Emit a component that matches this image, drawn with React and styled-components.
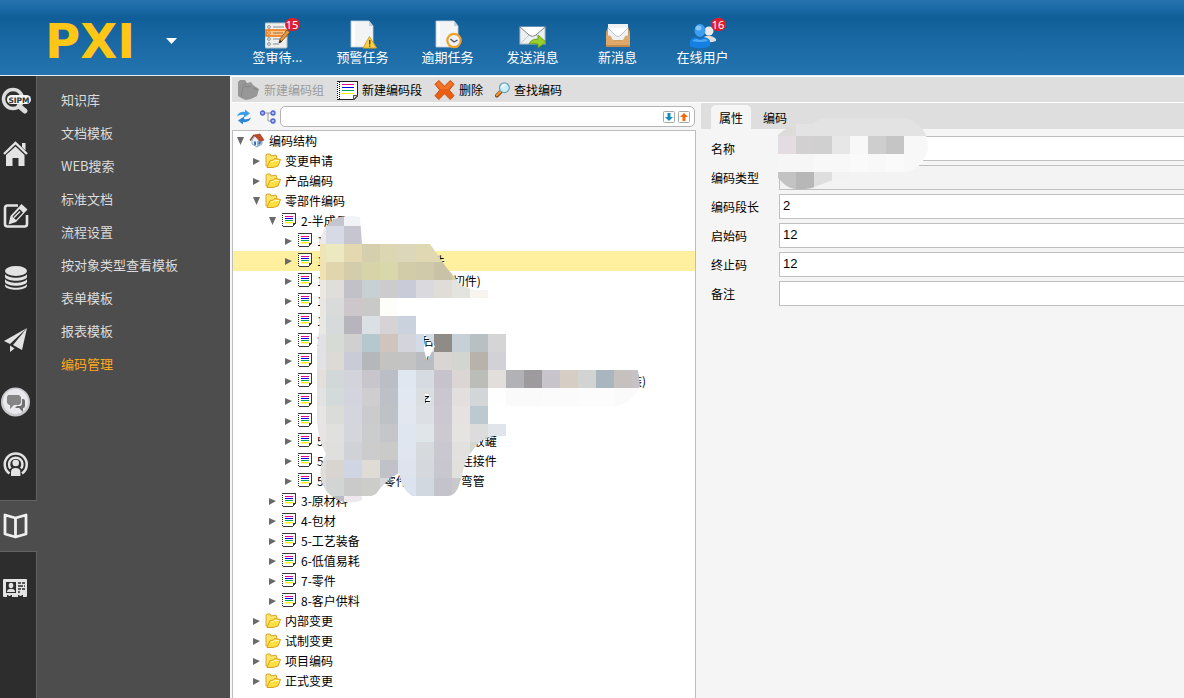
import React, { useState } from 'react';
import styled, { createGlobalStyle, css } from 'styled-components';

const GlobalStyle = createGlobalStyle`
  * {
    box-sizing: border-box;
  }

  body {
    margin: 0;
    background: #f5f5f5;
    color: #000;
    font-family: 'Noto Sans CJK SC', sans-serif;
    font-size: 12px;
  }

  button,
  input {
    font: inherit;
    color: inherit;
  }

  button {
    padding: 0;
    border: 0;
    background: none;
    cursor: pointer;
  }

  ul {
    margin: 0;
    padding: 0;
    list-style: none;
  }

  svg {
    display: block;
    flex: none;
  }
`;

const StyledPage = styled.div`
  display: flex;
  flex-direction: column;
  min-height: 100vh;
`;

const StyledHeader = styled.header`
  display: flex;
  align-items: stretch;
  height: 76px;
  border-bottom: 1px solid #e4eef6;
  background: linear-gradient(#2673af 0, #1d6ba6 8px, #0f5e97 18px, #13629c 24px, #2474b0 75px);
`;

const StyledBrand = styled.div`
  display: flex;
  align-items: center;
  flex: none;
  width: 235px;
  padding: 6px 0 0 45px;

  .name {
    width: 121px;
    color: #ffc715;
    font-family: 'DejaVu Sans', sans-serif;
    font-size: 48px;
    font-weight: 700;
    line-height: 48px;
  }
`;

const StyledShortcuts = styled.nav`
  display: flex;
`;

const StyledShortcut = styled.button`
  display: flex;
  flex-direction: column;
  align-items: center;
  width: 85px;
  padding-top: 20px;
  color: #fff;
  font-size: 13px;
  line-height: 16px;

  .picture {
    position: relative;
    height: 29px;
  }
`;

const StyledBadge = styled.span`
  position: absolute;
  top: -2px;
  right: -9px;
  width: 15px;
  height: 13px;
  border-radius: 7px;
  background: #dc1f2e;
  font-family: 'Noto Sans', sans-serif;
  font-size: 11px;
  line-height: 13px;
  text-align: center;
`;

const StyledMain = styled.div`
  display: flex;
  flex: 1;
`;

const StyledRail = styled.nav`
  display: flex;
  flex-direction: column;
  flex: none;
  gap: 10px;
  width: 37px;
  background: #2d2d2d;
  box-shadow: inset -1px 0 #626262;
`;

const StyledRailItem = styled.button`
  display: flex;
  align-items: center;
  height: 52px;
  padding-left: 1px;

  &:first-child {
    margin-bottom: -10px;
  }

  ${({ $active }) =>
    $active &&
    css`
      border-top: 1px solid #626262;
      border-bottom: 1px solid #626262;
      background: #4d4d4d;
    `};
`;

const StyledMenu = styled.nav`
  display: flex;
  flex-direction: column;
  flex: none;
  width: 193px;
  padding: 7px 0 0 24px;
  background: #4d4d4d;
`;

const StyledMenuLink = styled.a`
  color: ${({ $active }) => ($active ? '#ffa81c' : '#dcdcdc')};
  font-size: 13px;
  line-height: 33px;
  text-decoration: none;
`;

const StyledWorkspace = styled.main`
  display: flex;
  flex-direction: column;
  flex: 1;
  min-width: 0;
  padding-left: 2px;
`;

const StyledToolbar = styled.div`
  display: flex;
  align-items: center;
  gap: 12px;
  height: 27px;
  padding-left: 6px;
  border-top: 1px solid #fff;
  border-bottom: 1px solid #fff;
  background: #dedede;
`;

const StyledToolButton = styled.button`
  display: flex;
  align-items: center;
  gap: 4px;
  line-height: 20px;

  &:disabled {
    color: #9b9b9b;
    cursor: default;
  }
`;

const StyledPanes = styled.div`
  display: flex;
  flex: 1;
  gap: 5px;
`;

const StyledTreePane = styled.section`
  display: flex;
  flex-direction: column;
  flex: none;
  width: 464px;
`;

const StyledSearch = styled.div`
  display: flex;
  align-items: center;
  gap: 8px;
  height: 27px;
  padding: 0 1px 0 4px;
`;

const StyledSearchBox = styled.div`
  display: flex;
  align-items: center;
  flex: 1;
  gap: 3px;
  height: 21px;
  margin-left: -4px;
  padding: 0 4px;
  border: 1px solid #b4b4b4;
  border-radius: 5px;
  background: #fff;

  input {
    flex: 1;
    min-width: 0;
    padding: 0;
    border: 0;
    outline: 0;
    background: none;
  }
`;

const StyledTree = styled.div`
  position: relative;
  flex: 1;
  border: 1px solid #bdbdbd;
  border-bottom: 0;
  background: #fff;
`;

const StyledTreeRow = styled.li`
  display: flex;
  align-items: center;
  height: 20px;
  padding-left: ${({ $level }) => $level * 16}px;
  background: ${({ $selected }) => ($selected ? '#fff09f' : 'none')};
  line-height: 20px;
  white-space: nowrap;

  .toggle {
    display: flex;
    align-items: center;
    justify-content: center;
    width: 16px;
    height: 20px;
    padding-right: 2px;
  }

  .label {
    display: flex;
    padding-left: 4px;
  }
`;

const StyledGap = styled.span`
  flex: none;
  width: ${({ $width }) => $width}px;
`;

const StyledTreeMask = styled.svg`
  position: absolute;
  top: 77px;
  left: 75px;
  pointer-events: none;
`;

const StyledDetails = styled.section`
  flex: 1;
  min-width: 0;
`;

const StyledTabs = styled.div`
  display: flex;
  align-items: flex-end;
  gap: 4px;
  height: 26px;
  padding-left: 10px;
  background: #dedede;
`;

const StyledTab = styled.button`
  width: 40px;
  height: 24px;
  border-radius: 5px 5px 0 0;
  background: ${({ $active }) => ($active ? '#f5f5f5' : 'none')};
`;

const StyledForm = styled.form`
  position: relative;
  display: flex;
  flex-direction: column;
  gap: 4px;
  padding: 7px 0 0 10px;
`;

const StyledField = styled.div`
  display: flex;
  align-items: center;

  label {
    width: 68px;
    line-height: 20px;
  }

  input {
    flex: 1;
    min-width: 0;
    height: 25px;
    padding: 0 3px 2px;
    border: 1px solid #bfbfbf;
    border-right: 0;
    border-radius: 0;
    outline: 0;
    background: #fff;
    font-family: 'Liberation Sans', Arial, sans-serif;
    font-size: 13px;
  }

  input:read-only {
    background: #f3f3f3;
  }
`;

const StyledFieldMask = styled.svg`
  position: absolute;
  top: -13px;
  left: 75px;
  pointer-events: none;
`;

/* header icons */

const Sheet = ({ children }) => (
  <svg width="28" height="29" viewBox="0 0 28 29">
    <path d="M2 1h18l4 5v21H2z" fill="#f2f4f5" stroke="#c9d2d8" strokeWidth="0.8" />
    <path d="M20 1v5h4z" fill="#c8d0d5" />
    <path d="M3 2h3v24H3z" fill="#fff" />
    {children}
  </svg>
);

const IconApprove = () => (
  <svg width="26" height="29" viewBox="0 0 26 29">
    <rect x="0" y="3" width="22" height="25" rx="1" fill="#eef0ef" stroke="#b7c0c5" />
    <g fill="#fff" stroke="#858c92">
      <circle cx="4" cy="7" r="1.4" />
      <circle cx="4" cy="19" r="1.4" />
      <circle cx="4" cy="24" r="1.4" />
      <path d="M8 7h11M8 19h7M8 24h6" />
    </g>
    <rect x="1" y="10" width="20" height="6" fill="#ffc78a" stroke="#ef7a15" strokeWidth="1.6" />
    <circle cx="4" cy="13" r="1.3" fill="#fff" stroke="#d46b17" />
    <path d="M8 13h10" stroke="#a66834" />
    <path d="M22 10l3 2-8 9-3 2 1-4z" fill="#e69a3d" stroke="#75461d" strokeWidth="0.8" />
    <path d="M14 23l1-3 2 2z" fill="#29221c" />
  </svg>
);

const IconWarning = () => (
  <Sheet>
    <path d="M20.5 16.5l7 11.500h-13.500z" fill="#f7cf4a" stroke="#d9a520" strokeLinejoin="round" />
    <path d="M20.700 20v4.500M20.700 25.500v1.300" stroke="#5a470d" strokeWidth="1.400" />
  </Sheet>
);

const IconOverdue = () => (
  <Sheet>
    <circle cx="20" cy="20.500" r="6.700" fill="#edf1f6" stroke="#f1a126" strokeWidth="2.200" />
    <path d="M16.500 19l3.500 3 3.500-2" fill="none" stroke="#556" strokeWidth="1.400" />
  </Sheet>
);

const IconSend = () => (
  <svg width="28" height="29" viewBox="0 0 28 29">
    <rect x="1" y="7" width="25" height="17" fill="#edf0f0" stroke="#b5bec3" />
    <path d="M1 24l9-9M26 24l-9-9" stroke="#c4cbce" />
    <path d="M1 7l9 8q3.500 3 7 0l9-8" fill="#fff" stroke="#7d8589" />
    <path d="M10 24q2-5 9-5v-4l8 7-8 6v-4q-4-1-9 0z" fill="#98cf2d" stroke="#5b9313" strokeWidth="0.8" />
  </svg>
);

const IconInbox = () => (
  <svg width="26" height="29" viewBox="0 0 26 29">
    <path d="M4 4h18l3 8v15H1V12z" fill="#cf9c61" />
    <path d="M3 4h20v16H3z" fill="#eff1f3" />
    <path d="M3 8l8 8q2 1 4 0l8-8" fill="#fff" stroke="#c0c8ce" />
    <path d="M1 15l5 1c1 4 3 5 7 5s6-1 7-5l5-1v12H1z" fill="#dda868" />
    <path d="M1 26h24" stroke="#a76f35" />
  </svg>
);

const IconUsers = () => (
  <svg width="28" height="29" viewBox="0 0 28 29">
    <circle cx="20" cy="11" r="4.500" fill="#ecebea" />
    <path d="M15 17c3-2 8-2 12 2v2q-5 2-12 1z" fill="#e0dfdd" />
    <ellipse cx="11" cy="10.500" rx="5.500" ry="6.500" fill="#3d9df0" />
    <ellipse cx="9.500" cy="8" rx="3" ry="2.500" fill="#83c6fa" />
    <path d="M1 26c-1-6 1-8 6-9 2 2 6 2 8 0 5 1 7 3 6 9-6 3-14 3-20 0z" fill="#1480e4" />
    <path d="M3 21q2-2 5-2 3 2 7 0 3 0 4 2-8 2-16 0z" fill="#4ca9f6" />
  </svg>
);

/* rail icons */

const RailIcon = ({ children }) => (
  <svg width="30" height="30" viewBox="0 0 30 30" fill="#e3e3e3">
    {children}
  </svg>
);

const IconSipm = () => (
  <RailIcon>
    <circle cx="12" cy="12" r="9.500" fill="none" stroke="#dcdcdc" strokeWidth="3.500" />
    <path d="M18 19l6 5" stroke="#dcdcdc" strokeWidth="5" strokeLinecap="round" />
    <rect x="6" y="8" width="24" height="9" rx="4.500" fill="#f5f5f5" />
    <text x="18" y="15.500" textAnchor="middle" fontFamily="DejaVu Sans" fontSize="7.500" fontWeight="700" fill="#333">
      SIPM
    </text>
  </RailIcon>
);

const IconHome = () => (
  <RailIcon>
    <path d="M14.500 7.500l9 8.500V27h-6v-8h-6v8H5V16z" />
    <path d="M3 15L14.500 4 26 15" fill="none" stroke="#e3e3e3" strokeWidth="2.400" />
    <path d="M21 4h3.500v7.500L21 8z" />
  </RailIcon>
);

const IconEdit = () => (
  <RailIcon>
    <path
      d="M17 4.500H6.500Q4 4.500 4 7v16q0 2.500 2.500 2.500h17Q26 25.500 26 23V14"
      fill="none"
      stroke="#e3e3e3"
      strokeWidth="2.600"
    />
    <path d="M20.500 3l6 5.500L15 21l-7.500 2.500L9.500 15z" />
    <path d="M11.500 15.500l7-7.500 3.500 3.500-7 7.500z" fill="#2d2d2d" />
    <path d="M13 16.500l6-6" stroke="#e3e3e3" strokeWidth="1.500" />
  </RailIcon>
);

const IconDatabase = () => (
  <RailIcon>
    <ellipse cx="15" cy="8" rx="11" ry="5" />
    <path d="M4 11c3 5 19 5 22 0v3c-2 5-20 5-22 0z" />
    <path d="M4 16c3 5 19 5 22 0v3c-2 5-20 5-22 0z" />
    <path d="M4 21c3 5 19 5 22 0v2c-2 5-20 5-22 0z" />
  </RailIcon>
);

const IconPlane = () => (
  <RailIcon>
    <path d="M26 3L3 16l6 3z" />
    <path d="M26 3L12 20l9 5z" />
    <path d="M9 20.500l4.500 3-4.500 3.500z" />
  </RailIcon>
);

const IconChat = () => (
  <RailIcon>
    <circle cx="14.500" cy="15" r="14.500" fill="#c9c9cc" />
    <circle cx="14.500" cy="14.500" r="12.500" fill="#e9e9ed" />
    <path d="M7 8h11l2 2v6l-2 2h-5l-4 4v-4H8l-2-2v-6z" fill="#858585" />
    <path d="M21 12h1q2 0 2 2v5q0 2-2 2v4l-4-4h-4l2-2h3q2 0 2-3z" fill="#6e6e6e" />
  </RailIcon>
);

const IconBroadcast = () => (
  <RailIcon>
    <g fill="none" stroke="#e3e3e3" strokeWidth="2.500">
      <path d="M8.500 24.500a11 11 0 1 1 12.500 0" />
      <path d="M9.500 19.500a6.700 6.700 0 1 1 10.500 0" />
    </g>
    <circle cx="14.700" cy="14" r="3.300" />
    <path d="M10 27v-4q0-4 4.700-4t4.700 4v4z" />
  </RailIcon>
);

const IconBook = () => (
  <RailIcon>
    <path
      d="M14.500 7L4 4v19l10.500 3L25 23V4L14.500 7v18"
      fill="none"
      stroke="#f0f0f0"
      strokeWidth="2.800"
      strokeLinejoin="round"
    />
  </RailIcon>
);

const IconCard = () => (
  <RailIcon>
    <rect x="2" y="6" width="24" height="18" rx="1" />
    <path d="M5 9h10v11H5z" fill="#2d2d2d" />
    <ellipse cx="10" cy="12.500" rx="2.300" ry="2.800" />
    <path d="M6 19q0-3 3-3h2q3 0 3 3z" />
    <path d="M17 10h3M21 10h3M17 13h5M23 13h1M17 16h3M21 16h3M17 19h2" stroke="#2d2d2d" strokeWidth="1.400" />
    <path d="M6 22h5v2H6zM17 22h5v2h-5z" fill="#2d2d2d" />
    <path d="M7.500 21h2v2h-2zM18.500 21h2v2h-2z" />
  </RailIcon>
);

/* toolbar and tree icons */

const IconGroup = () => (
  <svg width="22" height="22" viewBox="0 0 22 22">
    <path d="M0 17V3l2-2h5l2 3 4-1 2 3 6 4-2 7-6 3-5 1-3-1z" fill="#979797" />
    <path d="M4 7l4-3M3 18l2-10 8-1M15 9l5 2" fill="none" stroke="#878787" />
  </svg>
);

const IconSegment = () => (
  <svg width="16" height="16" viewBox="0 0 16 16" shapeRendering="crispEdges">
    <path d="M2 1h13v9l-3 3H2z" fill="#fff" />
    <path d="M1 0h14v1H1zM14 0h1v10h-1zM2 13h10v1H2zM12 10h1v3h-1zM13 10h2v1h-2zM13 11h1v1h-1z" fill="#3a3a3a" />
    <path d="M1 2h1v1H1zM1 4h1v1H1zM1 6h1v1H1zM1 8h1v1H1zM1 10h1v1H1zM1 12h1v1H1z" fill="#222" />
    <path d="M4 3h8v1H4z" fill="#ec008c" />
    <path d="M4 5h8v1H4z" fill="#0000f0" />
    <path d="M4 7h8v1H4z" fill="#00a651" />
    <path d="M4 9h8v1H4z" fill="#fff200" />
    <path d="M4 10h7v1H4z" fill="#fff799" />
  </svg>
);

const IconNewSegment = () => (
  <svg width="22" height="22" viewBox="0 0 22 22" shapeRendering="crispEdges">
    <path d="M1 2h20v14l-4 4H1z" fill="#fff" />
    <path d="M1 2h21v1H1zM21 2h1v14h-1zM2 20h16v1H2z" fill="#222" />
    <path d="M17 16h5v1l-4 4h-1z" fill="#555" />
    <path d="M18 17h2v1h-1v1h-1z" fill="#ddd" />
    <path d="M1 2v19M3 3v17" stroke="#111" strokeWidth="1" strokeDasharray="1 1" />
    <path d="M6 5h12v1H6z" fill="#ec008c" />
    <path d="M6 8h12v1H6z" fill="#0000f0" />
    <path d="M6 11h12v1H6z" fill="#00a651" />
    <path d="M6 14h12v1H6z" fill="#fff200" />
  </svg>
);

const IconDelete = () => (
  <svg width="21" height="22" viewBox="0 0 22 22">
    <path
      d="M5 1l6 6 6-6 4 4-5 6 5 6-4 4-6-6-6 6-4-4 5-6-5-6z"
      fill="#e85e14"
      stroke="#cf4f0c"
      strokeLinejoin="round"
    />
    <path d="M5 2l6 6 6-6 3 3-5 5H7L2 5z" fill="#f07428" />
  </svg>
);

const IconFind = () => (
  <svg width="15" height="18" viewBox="0 0 16 18">
    <path d="M6 11l-4 4" stroke="#7d451c" strokeWidth="4" strokeLinecap="round" />
    <path d="M6 10.500L2 14.500" stroke="#f19a32" strokeWidth="2.200" strokeLinecap="round" />
    <circle cx="10" cy="6.500" r="5.200" fill="#c9efff" stroke="#6d9fb6" strokeWidth="1.300" />
    <path d="M7 6q1-3 4-2.500" stroke="#fff" strokeWidth="1.500" fill="none" />
  </svg>
);

const IconRefresh = () => (
  <svg width="16" height="16" viewBox="0 0 16 16">
    <path d="M1 7.500Q3 2 9 3V0.500l5 4-6 4V6Q4 5 1 7.500z" fill="#3aa0ea" />
    <path d="M15 8.500Q13 14 7 13v2.500l-5-4 6-4V10q4 1 7-1.500z" fill="#2b86d8" />
  </svg>
);

const IconHierarchy = () => (
  <svg width="16" height="16" viewBox="0 0 16 16">
    <path d="M5 4h6M8 4v8h3" fill="none" stroke="#999" />
    <g fill="#aebcfa" stroke="#4a63d0" strokeWidth="1.300">
      <circle cx="2.500" cy="4" r="2" />
      <circle cx="13" cy="4" r="2" />
      <circle cx="13" cy="12" r="2" />
    </g>
  </svg>
);

const IconStep = ({ up }) => (
  <svg width="12" height="12" viewBox="0 0 12 12">
    <rect x="0.500" y="0.500" width="11" height="11" rx="1" fill="#fff" stroke="#a8a8a8" />
    {up ? (
      <path d="M6 2l4 4H7.500v4h-3V6H2z" fill="#f26a0c" />
    ) : (
      <path d="M6 10L2 6h2.500V2h3v4H10z" fill="#148dbb" />
    )}
  </svg>
);

const IconRoot = () => (
  <svg width="16" height="16" viewBox="0 0 16 16">
    <path d="M3 7l3-4 7 4v4l-5 3-5-3z" fill="#e9f3ff" stroke="#5984b8" strokeWidth="0.700" />
    <path d="M8 13.500V8l5-2v5z" fill="#8fb7e4" />
    <path d="M5 2l6-1 4 6-4 1.500z" fill="#c54824" stroke="#83341e" strokeWidth="0.600" />
    <path d="M5 2L1 7.500" stroke="#983c20" strokeWidth="1.300" />
    <path d="M5 8.500h2v4l-2-1zM9.500 9.500l2-1v2l-2 1z" fill="#426d9f" />
  </svg>
);

const IconFolder = () => (
  <svg width="16" height="16" viewBox="0 0 16 16">
    <path d="M1 13V2l1-1h3l1 2 5-1 1 3v6z" fill="#ffe566" stroke="#dba52a" />
    <path d="M2 14.500l3-7 3.500-.500 1-1.500 6 1-2.500 6.500-5 1.500z" fill="#ffe040" stroke="#d9a020" />
    <path d="M6 8.800l3-.600 1-1 4 .600" stroke="#fff9c4" fill="none" />
  </svg>
);

const Arrow = ({ open }) => (
  <svg width="8" height="8" viewBox="0 0 8 8" fill="#6a6a6a">
    {open ? <path d="M1 0h7L4.500 8z" /> : <path d="M1 1l7 3-7 4z" />}
  </svg>
);

const nodeIcons = { root: IconRoot, folder: IconFolder, segment: IconSegment };

const shortcuts = [
  { label: '签审待...', icon: IconApprove, badge: 15 },
  { label: '预警任务', icon: IconWarning },
  { label: '逾期任务', icon: IconOverdue },
  { label: '发送消息', icon: IconSend },
  { label: '新消息', icon: IconInbox },
  { label: '在线用户', icon: IconUsers, badge: 16 },
];

const railItems = [
  { name: '搜索', icon: IconSipm },
  { name: '首页', icon: IconHome },
  { name: '编辑', icon: IconEdit },
  { name: '数据', icon: IconDatabase },
  { name: '发送', icon: IconPlane },
  { name: '消息', icon: IconChat },
  { name: '广播', icon: IconBroadcast },
  { name: '知识库', icon: IconBook, active: true },
  { name: '名片', icon: IconCard },
];

const menu = [
  '知识库',
  '文档模板',
  'WEB搜索',
  '标准文档',
  '流程设置',
  '按对象类型查看模板',
  '表单模板',
  '报表模板',
  '编码管理',
];

// a number in a label is the width of a hidden part of the name
const tree = [
  { level: 0, type: 'root', label: ['编码结构'], open: true },
  { level: 1, type: 'folder', label: ['变更申请'] },
  { level: 1, type: 'folder', label: ['产品编码'] },
  { level: 1, type: 'folder', label: ['零部件编码'], open: true },
  { level: 2, type: 'segment', label: ['2-半成品'], open: true },
  { level: 3, type: 'segment', label: ['1'] },
  { level: 3, type: 'segment', label: ['1', 109, '件'] },
  { level: 3, type: 'segment', label: ['1', 129, '切件)'] },
  { level: 3, type: 'segment', label: ['1'] },
  { level: 3, type: 'segment', label: ['1'] },
  { level: 3, type: 'segment', label: ['2', 98, '后.'] },
  { level: 3, type: 'segment', label: [107, '/'] },
  { level: 3, type: 'segment', label: [313, '装)'] },
  { level: 3, type: 'segment', label: [102, '子'] },
  { level: 3, type: 'segment', label: [] },
  { level: 3, type: 'segment', label: ['5', 149, '收罐'] },
  { level: 3, type: 'segment', label: ['5', 137, '连接件'] },
  { level: 3, type: 'segment', label: ['5', 60, '零件', 53, '弯管'] },
  { level: 2, type: 'segment', label: ['3-原材料'] },
  { level: 2, type: 'segment', label: ['4-包材'] },
  { level: 2, type: 'segment', label: ['5-工艺装备'] },
  { level: 2, type: 'segment', label: ['6-低值易耗'] },
  { level: 2, type: 'segment', label: ['7-零件'] },
  { level: 2, type: 'segment', label: ['8-客户供料'] },
  { level: 1, type: 'folder', label: ['内部变更'] },
  { level: 1, type: 'folder', label: ['试制变更'] },
  { level: 1, type: 'folder', label: ['项目编码'] },
  { level: 1, type: 'folder', label: ['正式变更'] },
];

const fields = [
  { id: 'name', label: '名称', value: '' },
  { id: 'type', label: '编码类型', value: '', readOnly: true },
  { id: 'length', label: '编码段长', value: '2' },
  { id: 'start', label: '启始码', value: '12' },
  { id: 'end', label: '终止码', value: '12' },
  { id: 'remark', label: '备注', value: '' },
];

// pixelated cover over the hidden names, one row of 18px cells per line
const treeCells = [
  'e8e8ea c4c6cf f1f3f7',
  'eceae8 d6dae4 c7c5d0',
  'efe4b4 ece9c0 e3d8b0 d6cfae dcd6b3 dcd7ba e0d8b2 e0d8b2',
  'f0e2b2 e1d5ae d4cdac d6d4a8 d9d8ab d2cca9 d0caaa c9c2a6 d1d3ab',
  'ebe8e4 e0dedb c3c1c8 c9d0d4 cccccc c9ccd8 dad9dd e0dcd8 e3e4e0 f8f5f1',
  'eae7e3 d9dbda cdc6ca c9cac8 fdfefa',
  'eae8e4 d6dadb b7b4bd dae0e3 d5d3d5 cad2dd',
  'e2e1e6 d8dad6 d0d0ce b4c8ce cfc5bd d3d5da d3dce6 8f8b86 c5d0d7 b9c0c3 d5d5d6',
  'e2e1e6 dddad6 c9ccd6 b5b8ba c3c3c2 c3c3c3 b9bcc0 d9d5d2 d3d5d0 b8b2ab d2d1d8',
  'e4dfdc d2d8d8 d2d3db c9c5cc bbbfc5 e0e7f1 d6dbe2 c6c3cd dbd6d3 bbbdb9 e2dedb b2b1b5 9d9b9e c7c5cb d6cdc4 d2d4d3 a9b6bf c6c1bf c6c2c5',
  'e3e2e3 d2dada d3d4dd d0cdd1 bdc0c6 e2e8f1 dadee1 cbc7d1 e2dfde d3d6d9 fefefe fafafa fafafa fbfbfb fbfbfb fcfcfc fbfcfb fafafa fafafa',
  'e6e4e5 d9dcd7 d4d5dd cbcbcd bec1c6 e2e8f0 dcdfe3 cbc8d1 e5e2df bdc9d0',
  'e6e4e5 e0e1df d5d5dc cbcccd c4c6c9 e0e6ef dfe6e9 ccc9d1 e5e4e0 dcdcdc dfe5ea',
  'e3e1e2 dfdfde d1d1d8 cbcccb cacac9 e0e6ef d6dadd c9c7d0 e2e1dd d5d7d2',
  'dfdddc d8d5d1 cfd5e2 dfdbd5 c1c1c9 dde4ee d5d9de c8c7d0 e2e0da',
  'dcdcdc d3d5d4 c9cac9 cccccb d6d7d9 dbe3ee d1d8e0 c4c3cc c9c9cb',
  'dcdcdc b9bcc0 eee8ee',
];

const fieldCells = [
  'dedcd8 e3e3e3 e3e3e3 e3e3e3 e3e3e3 e3e3e3 e3e3e3 e3e3e3 e3e3e3',
  'e3dde1 d2d0d1 d0d0d0 e7e7e7 f8f8f8 cecece c5c5c5 f8f8f8 f8f8f8',
  'f6f6f6 f6f6f6 f8f8f8 f8f8f8 fafafa f8f8f8 fafafa f8f8f8 f8f8f8',
  'c3c3c3 b7b7b7 dedede f2f2f2 f3f3f3 f3f3f3 f4f4f4',
];

const Cells = ({ rows, x, y }) =>
  rows.map((row, r) =>
    row
      .split(' ')
      .map((color, c) => (
        <rect key={`${r}-${c}`} x={x + c * 18} y={y + r * 18} width="18" height="18" fill={`#${color}`} />
      )),
  );

const TreeMask = () => (
  <StyledTreeMask width="344" height="300" viewBox="308 208 344 300" shapeRendering="crispEdges" aria-hidden="true">
    <clipPath id="tree-mask">
      <path
        clipRule="evenodd"
        d="M340 217Q350 215 360 217L362 244H430L446 267L462 286L475 290H488V298H470V334H506V370H638L640 386Q632 404 615 406H488V424H506V436H494Q480 438 473 450Q465 458 462 476L458 488Q454 496 448 496H412Q402 490 399 473L390 478Q380 488 376 494L362 500Q350 505 338 500L330 495Q318 484 321 466L326 454Q318 440 317 420L317 350L320 320V240Q324 222 340 217ZM424 334L435 346L427 361L424 350ZM425 394H428L431 399L429 403H425Z"
      />
    </clipPath>
    <g clipPath="url(#tree-mask)">
      <Cells rows={treeCells} x={308} y={208} />
    </g>
  </StyledTreeMask>
);

const FieldMask = () => (
  <StyledFieldMask width="156" height="76" viewBox="776 116 156 76" shapeRendering="crispEdges" aria-hidden="true">
    <clipPath id="field-mask">
      <path d="M778 135L784 130L797 124H812L822 118H904Q928 124 928 148Q925 166 908 172L880 173L850 177L830 181L812 188Q792 192 784 184L778 178Z" />
    </clipPath>
    <g clipPath="url(#field-mask)">
      <Cells rows={fieldCells} x={778} y={118} />
    </g>
  </StyledFieldMask>
);

const Header = () => (
  <StyledHeader>
    <StyledBrand>
      <span className="name">PXI</span>
      <button type="button" aria-label="切换">
        <svg width="11" height="6" viewBox="0 0 11 6" fill="#fff">
          <path d="M0 0h11L5.500 6z" />
        </svg>
      </button>
    </StyledBrand>
    <StyledShortcuts>
      {shortcuts.map(({ label, icon: Icon, badge }) => (
        <StyledShortcut key={label} type="button">
          <span className="picture">
            <Icon />
            {badge && <StyledBadge>{badge}</StyledBadge>}
          </span>
          {label}
        </StyledShortcut>
      ))}
    </StyledShortcuts>
  </StyledHeader>
);

const Tree = () => {
  const [selected, setSelected] = useState(6);

  return (
    <StyledTree>
      <ul role="tree">
        {tree.map(({ level, type, label, open }, i) => {
          const Icon = nodeIcons[type];

          return (
            <StyledTreeRow
              key={i}
              role="treeitem"
              aria-selected={i === selected}
              $level={level}
              $selected={i === selected}
              onClick={() => setSelected(i)}>
              <button className="toggle" type="button" aria-label={open ? '收起' : '展开'}>
                <Arrow open={open} />
              </button>
              <Icon />
              <span className="label">
                {label.map((part, n) =>
                  typeof part === 'number' ? (
                    <StyledGap key={n} $width={part} />
                  ) : (
                    <span key={n}>{part}</span>
                  ),
                )}
              </span>
            </StyledTreeRow>
          );
        })}
      </ul>
      <TreeMask />
    </StyledTree>
  );
};

const Details = () => {
  const [tab, setTab] = useState('属性');

  return (
    <StyledDetails>
      <StyledTabs role="tablist">
        {['属性', '编码'].map(name => (
          <StyledTab
            key={name}
            type="button"
            role="tab"
            aria-selected={tab === name}
            $active={tab === name}
            onClick={() => setTab(name)}>
            {name}
          </StyledTab>
        ))}
      </StyledTabs>
      <StyledForm>
        {fields.map(({ id, label, value, readOnly }) => (
          <StyledField key={id}>
            <label htmlFor={id}>{label}</label>
            <input id={id} type="text" defaultValue={value} readOnly={readOnly} />
          </StyledField>
        ))}
        <FieldMask />
      </StyledForm>
    </StyledDetails>
  );
};

const App = () => (
  <StyledPage>
    <GlobalStyle />
    <Header />
    <StyledMain>
      <StyledRail>
        {railItems.map(({ name, icon: Icon, active }) => (
          <StyledRailItem key={name} type="button" aria-label={name} $active={active}>
            <Icon />
          </StyledRailItem>
        ))}
      </StyledRail>
      <StyledMenu>
        {menu.map(name => (
          <StyledMenuLink key={name} href="#" $active={name === '编码管理'}>
            {name}
          </StyledMenuLink>
        ))}
      </StyledMenu>
      <StyledWorkspace>
        <StyledToolbar>
          <StyledToolButton type="button" disabled>
            <IconGroup />
            新建编码组
          </StyledToolButton>
          <StyledToolButton type="button">
            <IconNewSegment />
            新建编码段
          </StyledToolButton>
          <StyledToolButton type="button">
            <IconDelete />
            删除
          </StyledToolButton>
          <StyledToolButton type="button">
            <IconFind />
            查找编码
          </StyledToolButton>
        </StyledToolbar>
        <StyledPanes>
          <StyledTreePane>
            <StyledSearch>
              <button type="button" aria-label="刷新">
                <IconRefresh />
              </button>
              <button type="button" aria-label="层级">
                <IconHierarchy />
              </button>
              <StyledSearchBox>
                <input type="text" aria-label="搜索编码" />
                <button type="button" aria-label="下一个">
                  <IconStep />
                </button>
                <button type="button" aria-label="上一个">
                  <IconStep up />
                </button>
              </StyledSearchBox>
            </StyledSearch>
            <Tree />
          </StyledTreePane>
          <Details />
        </StyledPanes>
      </StyledWorkspace>
    </StyledMain>
  </StyledPage>
);

export default App;
